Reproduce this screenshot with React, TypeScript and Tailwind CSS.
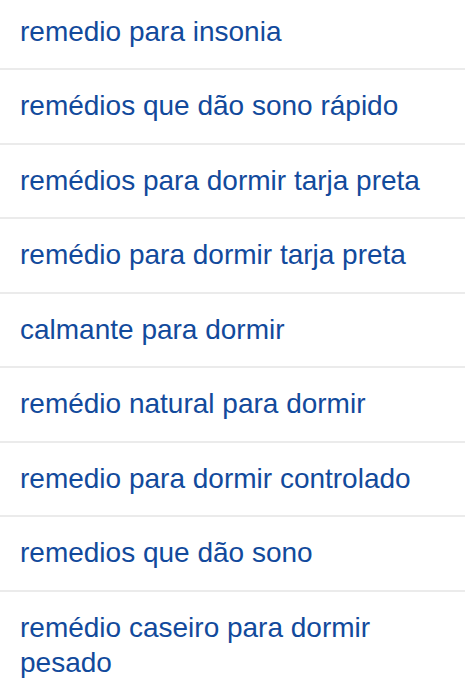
import React from 'react';

const searches = [
    "remedio para insonia",
    "remédios que dão sono rápido",
    "remédios para dormir tarja preta",
    "remédio para dormir tarja preta",
    "calmante para dormir",
    "remédio natural para dormir",
    "remedio para dormir controlado",
    "remedios que dão sono",
    "remédio caseiro para dormir pesado",
];

export default function App() {
    return (
        <div className="min-h-screen bg-white font-['Liberation_Sans',Arial,sans-serif]">
            <ul>
                {searches.map((s, i) => (
                    <li
                        key={s}
                        className={`px-5 border-[#ebebeb] ${i === 0 ? 'pt-[14px] pb-[19px]' : 'pt-[18px] pb-[19.57px]'} ${i < searches.length - 1 ? 'border-b-2' : ''}`}
                    >
                        <a href="#" className="block text-[28px] leading-[35px] text-[#124a9c]">
                            {s}
                        </a>
                    </li>
                ))}
            </ul>
        </div>
    );
}
